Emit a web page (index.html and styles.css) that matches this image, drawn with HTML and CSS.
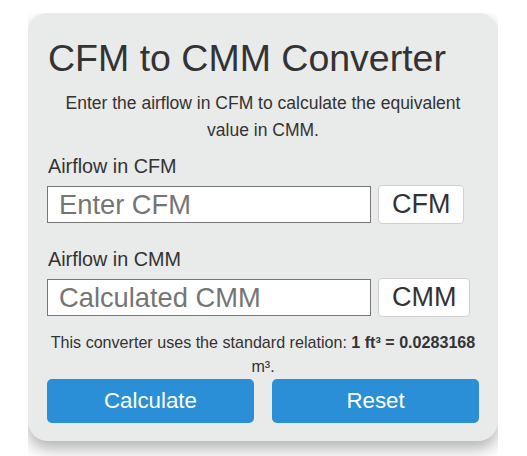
FILE: index.html
```html
<!DOCTYPE html>
<html lang="en">
<head>
    <meta charset="UTF-8">
    <meta name="viewport" content="width=device-width, initial-scale=1.0">
    <title>CFM to CMM Converter</title>
    <link rel="stylesheet" href="styles.css">
</head>
<body>
    <div class="frame">
        <div class="converter">
            <h1>CFM to CMM Converter</h1>
            <p class="intro">Enter the airflow in CFM to calculate the equivalent value in CMM.</p>

            <label class="field-label" for="cfm-input">Airflow in CFM</label>
            <div class="field-row">
                <input type="number" id="cfm-input" placeholder="Enter CFM">
                <span class="unit">CFM</span>
            </div>

            <label class="field-label second" for="cmm-output">Airflow in CMM</label>
            <div class="field-row">
                <input type="text" id="cmm-output" placeholder="Calculated CMM" readonly>
                <span class="unit">CMM</span>
            </div>

            <p class="note">This converter uses the standard relation: <strong>1 ft³ = 0.0283168</strong> m³.</p>

            <div class="actions">
                <button id="calc-btn">Calculate</button>
                <button id="reset-btn">Reset</button>
            </div>
        </div>
    </div>

    <script>
        let cfmInput = document.getElementById("cfm-input");
        let cmmOutput = document.getElementById("cmm-output");

        // 1 cubic foot = 0.0283168 cubic metres
        document.getElementById("calc-btn").addEventListener("click", function () {
            let cfm = parseFloat(cfmInput.value);
            if (isNaN(cfm)) {
                cmmOutput.value = "";
                return;
            }
            cmmOutput.value = (cfm * 0.0283168).toFixed(4);
        });

        document.getElementById("reset-btn").addEventListener("click", function () {
            cfmInput.value = "";
            cmmOutput.value = "";
        });
    </script>
</body>
</html>
```

FILE: styles.css
```css
body {
    font-family: "Liberation Sans", Arial, sans-serif;
    background-color: #ffffff;
    color: #333333;
    margin: 0;
}

.frame {
    margin: 13px 0 0 28px;
    width: 470px;
    height: 443px;
    overflow: hidden;
}

.converter {
    background-color: #e9eaea;
    border-radius: 20px;
    padding: 24px 19px 18px;
    box-shadow: 0 8px 16px rgba(0, 0, 0, 0.3);
}

h1 {
    margin: 0;
    padding-left: 1px;
    font-size: 37.5px;
    font-weight: normal;
    line-height: 42px;
}

.intro {
    margin: 11px 0 0;
    text-align: center;
    font-size: 17.5px;
    line-height: 27px;
}

.field-label {
    display: block;
    margin-top: 11px;
    padding-left: 1px;
    font-size: 19.8px;
    line-height: 23px;
}

.field-label.second {
    margin-top: 24px;
}

.field-row {
    display: flex;
    align-items: center;
    gap: 7px;
    margin-top: 7px;
}

.field-row input {
    box-sizing: border-box;
    width: 324px;
    height: 37px;
    padding: 0 11px;
    font-family: inherit;
    font-size: 27.3px;
    color: #333333;
    border: 1px solid #767676;
    border-radius: 0;
    background: #ffffff;
}

.field-row input::placeholder {
    color: #757575;
}

.unit {
    box-sizing: border-box;
    height: 39px;
    line-height: 37px;
    padding: 0 13px;
    font-size: 27px;
    background: #ffffff;
    border: 1px solid #d0d0d0;
    border-radius: 4px;
}

.note {
    margin: 13px 0 0;
    text-align: center;
    font-size: 16.1px;
    line-height: 24px;
}

.actions {
    display: flex;
    gap: 18px;
    margin-top: 1px;
}

.actions button {
    flex: 1;
    height: 44px;
    font-family: inherit;
    font-size: 22.3px;
    color: #ffffff;
    background-color: #2b8fd7;
    border: none;
    border-radius: 5px;
    cursor: pointer;
}
```
